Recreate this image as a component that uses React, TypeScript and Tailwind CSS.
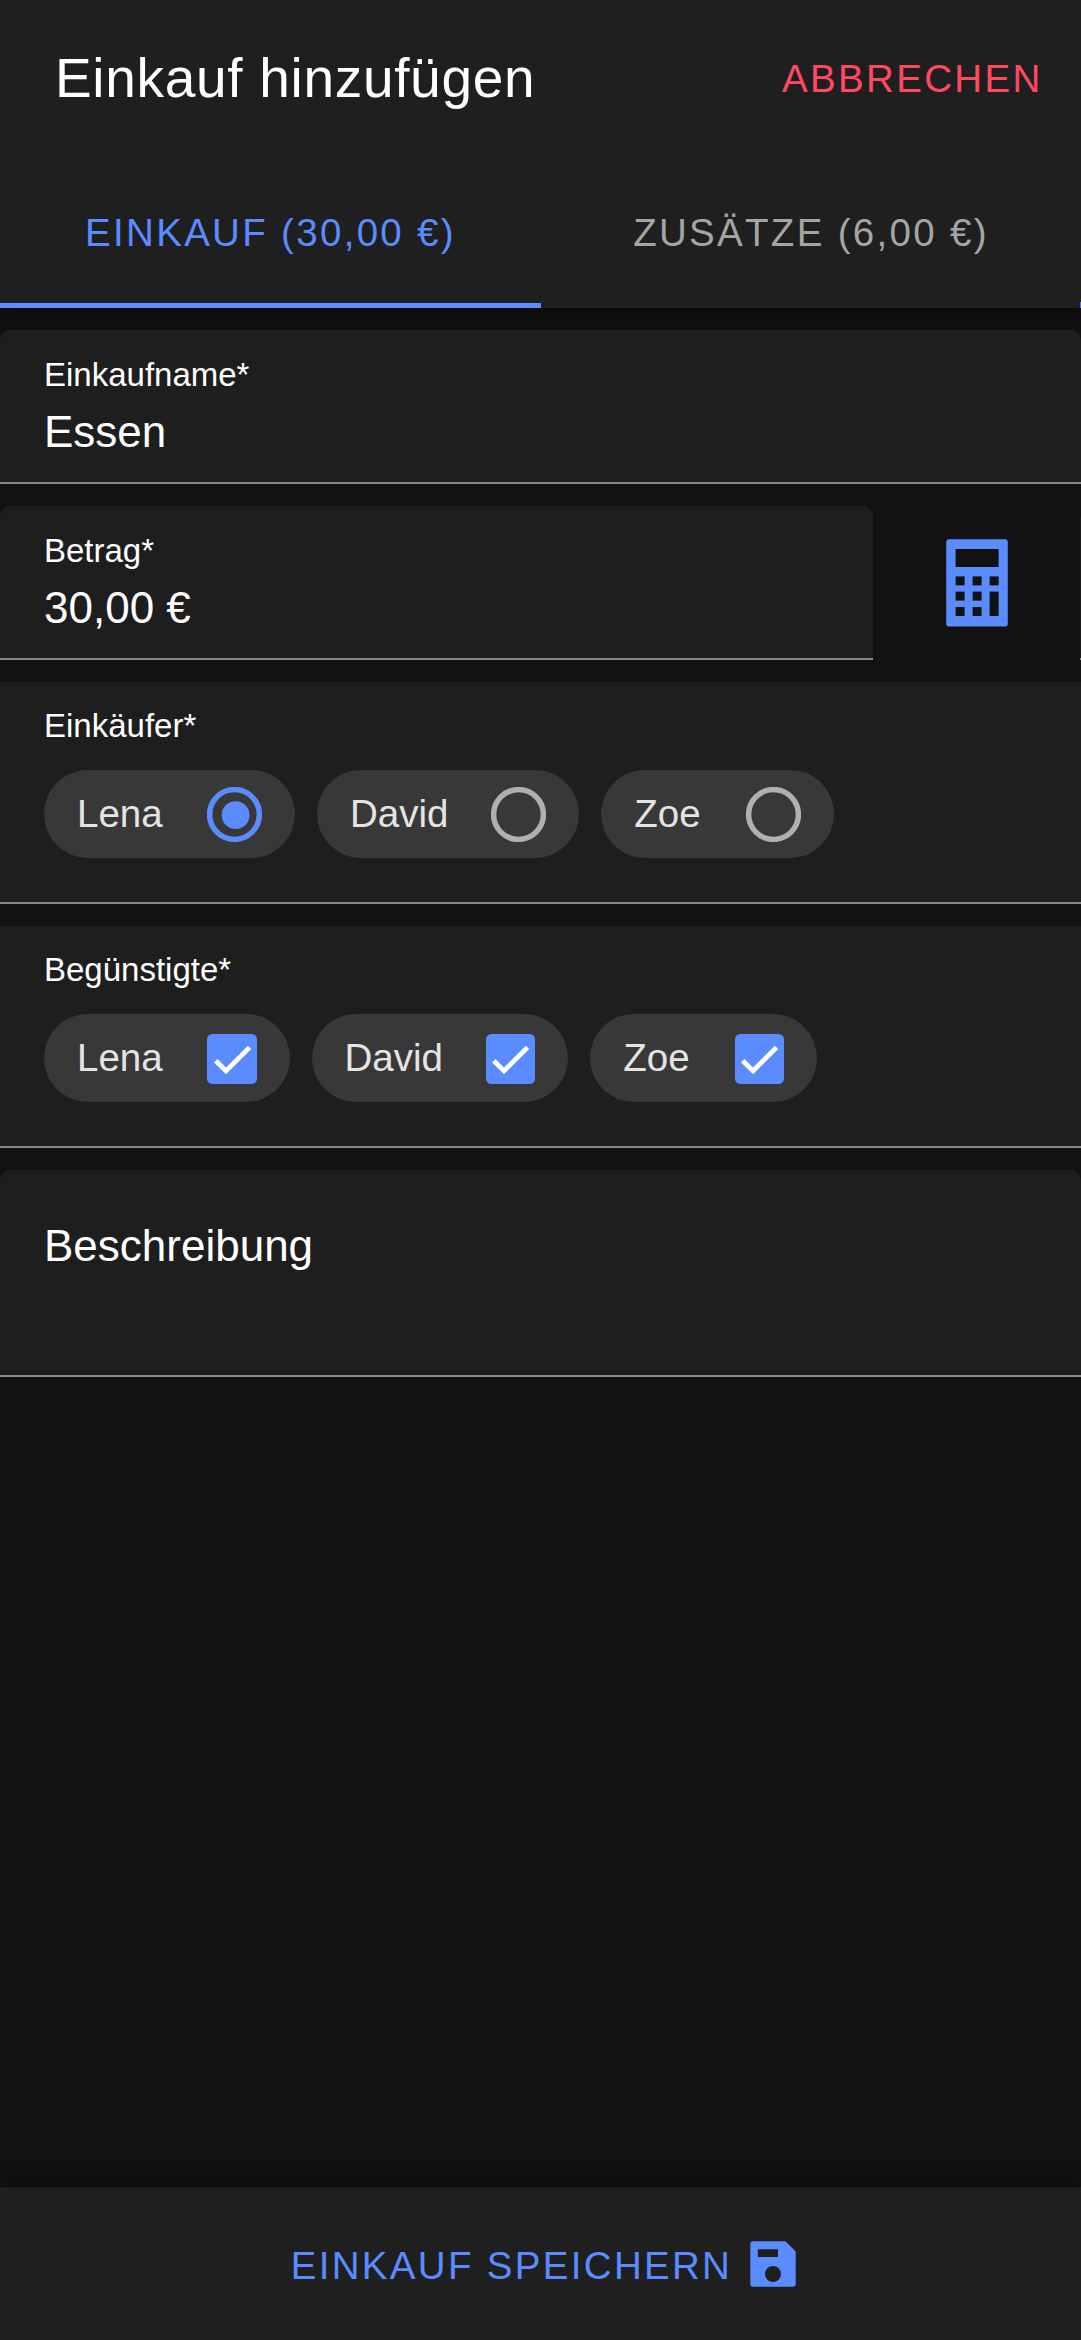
import React from "react";

function Radio({ checked }: { checked?: boolean }) {
  return (
    <svg className="size-[55px] shrink-0" viewBox="0 0 55 55" fill="none">
      <circle cx="27.5" cy="27.5" r="24.9" strokeWidth="5.5" stroke={checked ? "#5a8cff" : "#b0b0b0"} />
      {checked && <circle cx="28.6" cy="28.2" r="13.9" fill="#5a8cff" />}
    </svg>
  );
}

function Checkbox() {
  return (
    <div className="mt-[2px] size-[49.5px] shrink-0 rounded-[5.5px] bg-[#5a8cff] p-[5.5px]">
      <svg className="size-full" viewBox="0 0 24 24" fill="none">
        <path d="M1.73 12.91 8.1 19.28 22.79 4.59" stroke="#fff" strokeWidth="3" />
      </svg>
    </div>
  );
}

function Chip({ name, width, children }: { name: string; width: string; children: React.ReactNode }) {
  return (
    <div
      className={`flex h-[88px] items-center justify-between rounded-full bg-[#383838] px-[33px] text-[38.5px] text-[#e4e4e4] ${width}`}
    >
      <span>{name}</span>
      {children}
    </div>
  );
}

function Field({ label, value }: { label: string; value: string }) {
  return (
    <div className="flex h-[154px] w-full flex-col rounded-t-[11px] border-b-2 border-[#878787] bg-[#1e1e1e] px-[44px] pt-[25px]">
      <span className="text-[33px] leading-[40px]">{label}</span>
      <span className="mt-[11px] text-[44px] leading-[52px]">{value}</span>
    </div>
  );
}

function Group({ label, children }: { label: string; children: React.ReactNode }) {
  return (
    <div className="h-[222px] border-b-2 border-[#878787] bg-[#1e1e1e] px-[44px] pt-[24px]">
      <div className="text-[33px] leading-[40px]">{label}</div>
      <div className="mt-[24px] flex gap-[22px]">{children}</div>
    </div>
  );
}

function CalculatorIcon() {
  return (
    <svg className="h-[88px] w-[62px]" viewBox="0 0 62 88">
      <rect x="0.2" y="0.2" width="61.6" height="87.4" rx="3" fill="#5a8cff" />
      <g fill="#121212">
        <rect x="9.6" y="10" width="43" height="18" />
        <rect x="9.6" y="37.4" width="9" height="9" />
        <rect x="26.6" y="37.4" width="9" height="9" />
        <rect x="43.6" y="37.4" width="9" height="9" />
        <rect x="9.6" y="52.6" width="9" height="9" />
        <rect x="26.6" y="52.6" width="9" height="9" />
        <rect x="43.6" y="52.6" width="9" height="24.4" />
        <rect x="9.6" y="68" width="9" height="9" />
        <rect x="26.6" y="68" width="9" height="9" />
      </g>
    </svg>
  );
}

function SaveIcon() {
  return (
    <svg className="size-[46px]" viewBox="0 0 46 46">
      <path
        fill="#5a8cff"
        fillRule="evenodd"
        d="M3 .3H35.5L45.7 10.5V43a2.8 2.8 0 0 1-2.8 2.8H3A2.8 2.8 0 0 1 .3 43V3A2.8 2.8 0 0 1 3 .3ZM7.8 8.2v7.9h20.2V8.2ZM23 25a8 8 0 1 0 0 16 8 8 0 0 0 0-16Z"
      />
    </svg>
  );
}

export default function App() {
  return (
    <div className="flex h-[2340px] w-full flex-col overflow-hidden bg-[#121212] font-['Liberation_Sans',Arial,sans-serif] text-white">
      <header className="shrink-0 bg-[#1f1f1f] shadow-[0_5.5px_11px_-2.75px_rgba(0,0,0,.2),0_11px_13.75px_0_rgba(0,0,0,.14),0_2.75px_27.5px_0_rgba(0,0,0,.12)]">
        <div className="flex h-[154px] items-center justify-between pr-[38.5px] pl-[55px] pt-[2px]">
          <h1 className="text-[55px] leading-[64px] tracking-[0.0125em]">Einkauf hinzufügen</h1>
          <button className="pt-[2px] text-[38.5px] leading-[46px] tracking-[0.06em] text-[#ff4961]">ABBRECHEN</button>
        </div>
        <nav className="flex h-[154px] text-[38.5px] tracking-[0.06em]">
          <button className="flex w-[541px] items-center justify-center border-b-[5.5px] border-[#5a8cff] pt-[9px] text-[#5a8cff]">
            EINKAUF (30,00 €)
          </button>
          <button className="flex flex-1 items-center justify-center pt-[3px] pl-px text-[#a5a5a5]">ZUSÄTZE (6,00 €)</button>
          <span className="h-[6px] w-px self-end bg-[#4a72cc]" />
        </nav>
      </header>

      <main className="flex flex-1 flex-col gap-[22px] pt-[22px]">
        <Field label="Einkaufname*" value="Essen" />
        <div className="flex">
          <div className="w-[873px]">
            <Field label="Betrag*" value="30,00 €" />
          </div>
          <button className="flex flex-1 items-center justify-center pb-px pl-[1px]">
            <CalculatorIcon />
          </button>
          <span className="h-[143px] w-px self-end border-b-2 border-[#878787] bg-[#1a1a1a]" />
        </div>
        <Group label="Einkäufer*">
          <Chip name="Lena" width="w-[251px]"><Radio checked /></Chip>
          <Chip name="David" width="w-[262.3px]"><Radio /></Chip>
          <Chip name="Zoe" width="w-[232.7px]"><Radio /></Chip>
        </Group>
        <Group label="Begünstigte*">
          <Chip name="Lena" width="w-[245.5px]"><Checkbox /></Chip>
          <Chip name="David" width="w-[256.8px]"><Checkbox /></Chip>
          <Chip name="Zoe" width="w-[227.2px]"><Checkbox /></Chip>
        </Group>
        <div className="h-[207px] rounded-t-[11px] border-b-2 border-[#878787] bg-[#1e1e1e] px-[44px] pt-[50px] text-[44px] leading-[52px]">
          Beschreibung
        </div>
      </main>

      <footer className="flex h-[153px] shrink-0 items-center justify-center bg-[#1f1f1f] pl-[6px] shadow-[0_-5.5px_11px_-2.75px_rgba(0,0,0,.2),0_-11px_13.75px_0_rgba(0,0,0,.1)]">
        <button className="flex items-center gap-[18px] text-[38.5px] leading-[46px] tracking-[0.06em] text-[#5a8cff]">
          <span className="pt-[4px]">EINKAUF SPEICHERN</span>
          <SaveIcon />
        </button>
      </footer>
    </div>
  );
}
